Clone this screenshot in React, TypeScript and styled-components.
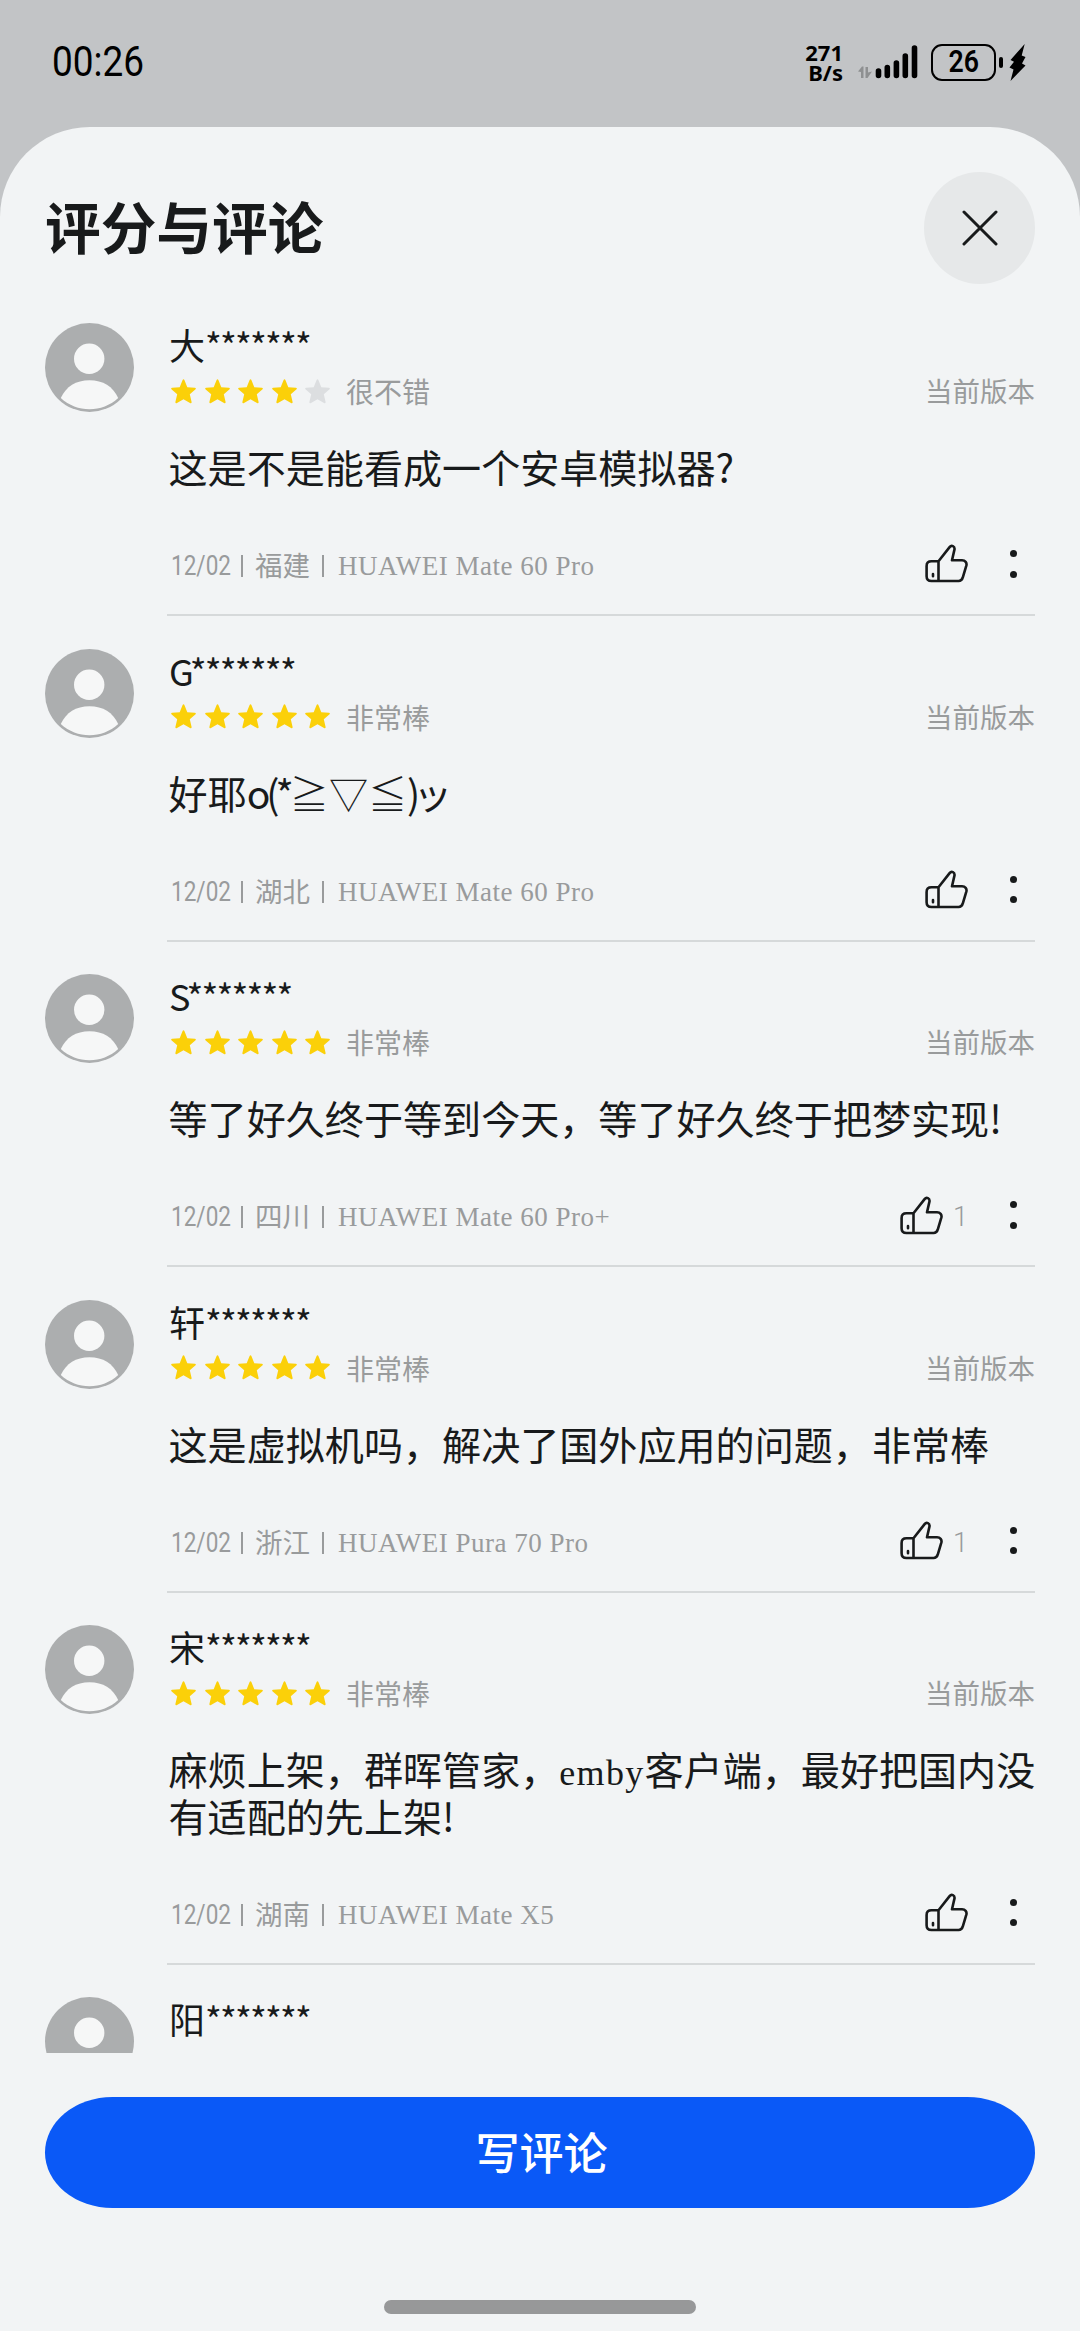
import React from "react";
import styled, { createGlobalStyle } from "styled-components";

const cjk = `"Noto Sans CJK SC", sans-serif`;

const GlobalStyle = createGlobalStyle`
  * { box-sizing: border-box; }
  body { margin: 0; background: #c2c4c6; }
`;

const Screen = styled.main`
  width: 1080px;
  height: 2331px;
  overflow: hidden;
  display: flex;
  flex-direction: column;
  background: #c2c4c6;
  font-family: ${cjk};
  color: #181a1b;
`;

const StatusBar = styled.header`
  height: 127px;
  flex: none;
  padding: 0 54px 3px 52px;
  display: flex;
  align-items: center;
  justify-content: space-between;
  color: #000;
`;

const Clock = styled.time`
  font: 400 42px/50px Roboto, sans-serif;
  transform: scaleX(0.88);
  transform-origin: left center;
`;

const StatusIcons = styled.div`
  display: flex;
  align-items: center;
`;

const NetSpeed = styled.div`
  font: 700 22px/20px "Noto Sans", sans-serif;
  text-align: right;
  margin: 0 15px 0 0;
`;

const SignalIcon = styled.svg`
  width: 60px;
  height: 36px;
  margin-right: 13px;
`;

const Battery = styled.div`
  width: 65px;
  height: 37px;
  border: 2.6px solid #000;
  border-radius: 11px;
  display: grid;
  place-items: center;
`;

const BatteryLevel = styled.span`
  font: 600 31px/32px Roboto, sans-serif;
  transform: scaleX(0.86);
`;

const BatteryNub = styled.i`
  width: 4.5px;
  height: 11px;
  border-radius: 2px;
  background: #000;
  margin: 0 6px 0 2.5px;
`;

const Bolt = styled.svg`
  width: 17px;
  height: 37px;
`;

const Sheet = styled.section`
  flex: 1;
  min-height: 0;
  display: flex;
  flex-direction: column;
  padding: 45px 45px 0;
  border-radius: 90px 90px 0 0;
  background: #f2f4f5;
`;

const SheetHeader = styled.div`
  height: 112px;
  flex: none;
  display: flex;
  align-items: center;
  justify-content: space-between;
`;

const Title = styled.h1`
  margin: -6px 0 0;
  font-size: 55.7px;
  line-height: 80px;
  font-weight: 700;
`;

const CloseButton = styled.button`
  width: 111px;
  height: 112px;
  padding: 0;
  border: 0;
  border-radius: 50%;
  background: #e6e8e9;
  display: grid;
  place-items: center;
`;

const List = styled.div`
  height: 1769px;
  flex: none;
  padding-top: 39px;
  overflow: hidden;
`;

const Review = styled.article`
  display: grid;
  grid-template-columns: 89px 868px;
  column-gap: 33px;
  align-items: start;
`;

const Avatar = styled.svg`
  width: 89px;
  height: 89px;
`;

const Content = styled.div`
  display: flex;
  flex-direction: column;
`;

const Name = styled.div`
  height: 46px;
  padding-left: 2px;
  font-size: 36px;
  line-height: 42px;
  display: flex;
`;

const Mask = styled.span<{ $afterLatin: boolean }>`
  letter-spacing: -1.8px;
  margin-left: ${(p) => (p.$afterLatin ? "-4px" : "0")};
`;

const RatingRow = styled.div`
  height: 44px;
  padding-left: 4px;
  display: flex;
  align-items: center;
  color: #999b9c;
  font-size: 28px;
  line-height: 44px;
`;

const Stars = styled.div`
  display: flex;
  gap: 8.5px;
  margin-right: 16px;
`;

const Star = styled.svg<{ $on: boolean }>`
  width: 25px;
  height: 25px;
  fill: ${(p) => (p.$on ? "#fbd009" : "#dcdee0")};
`;

const Version = styled.span`
  margin: -2px 0 0 auto;
  font-size: 27.5px;
`;

const Body = styled.p`
  margin: 30px -6px 0 0;
  padding-left: 1.5px;
  font-size: 39.1px;
  line-height: 46.4px;
  white-space: pre;
`;

const Latin = styled.span`
  font-family: "Liberation Serif", ${cjk};
  font-size: 36px;
  line-height: 1;
  letter-spacing: 1.3px;
`;

const Tight = styled.span<{ $by: number }>`
  letter-spacing: ${(p) => p.$by}px;
`;

const Symbols = styled.span`
  font-weight: 300;
`;

const Footer = styled.div`
  height: 40px;
  margin: 56.5px 0 28px;
  padding: 0 18px 0 4px;
  display: flex;
  align-items: center;
  color: #999b9c;
`;

const Meta = styled.div`
  display: flex;
  gap: 12px;
  font-size: 27.5px;
  line-height: 40px;
`;

const DateText = styled.span`
  font-family: Roboto, sans-serif;
  width: 58px;
  white-space: nowrap;
  transform: scaleX(0.82);
  transform-origin: left center;
`;

const Region = styled.span`
  line-height: 37px;
`;

const Pipe = styled.i`
  align-self: center;
  width: 2px;
  height: 22px;
  background: #999b9c;
`;

const Model = styled.span`
  font-family: "Liberation Serif", serif;
  font-size: 27px;
  letter-spacing: 0.5px;
  margin-left: 2px;
`;

const Actions = styled.div`
  margin-left: auto;
  display: flex;
  align-items: center;
`;

const ThumbIcon = styled.svg`
  width: 43px;
  height: 40px;
  margin-top: -5px;
`;

const Count = styled.span`
  width: 25px;
  text-align: right;
  font: 300 27px/40px Roboto, sans-serif;
`;

const MoreDots = styled.div`
  width: 7px;
  margin: -4px 0 0 42px;
  display: flex;
  flex-direction: column;
  gap: 13.5px;
`;

const Dot = styled.i`
  width: 7px;
  height: 7px;
  border-radius: 50%;
  background: #181a1b;
`;

const Divider = styled.hr`
  width: 100%;
  height: 2px;
  margin: 0 0 32.7px;
  border: 0;
  background: #d6d9da;
`;

const WriteButton = styled.button`
  width: 990px;
  height: 111px;
  flex: none;
  margin-top: 44px;
  border: 0;
  padding: 0 0 4px 3px;
  border-radius: 68px / 56px;
  background: #0a59f7;
  color: #fff;
  font: 500 44px/64px ${cjk};
`;

const HomeIndicator = styled.div`
  width: 312px;
  height: 14px;
  margin: 92px auto 0;
  border-radius: 7px;
  background: #979899;
`;

interface ReviewData {
  name: string;
  stars: number;
  label: string;
  body?: React.ReactNode;
  region?: string;
  model?: string;
  likes?: number;
}

const reviews: ReviewData[] = [
  { name: "大", stars: 4, label: "很不错", body: "这是不是能看成一个安卓模拟器?", region: "福建", model: "HUAWEI Mate 60 Pro" },
  { name: "G", stars: 5, label: "非常棒", body: <>好耶<Tight $by={-4}>o(*</Tight><Symbols>≧▽≦</Symbols><Tight $by={-7}>)</Tight>ッ</>, region: "湖北", model: "HUAWEI Mate 60 Pro" },
  { name: "S", stars: 5, label: "非常棒", body: "等了好久终于等到今天，等了好久终于把梦实现!", region: "四川", model: "HUAWEI Mate 60 Pro+", likes: 1 },
  { name: "轩", stars: 5, label: "非常棒", body: "这是虚拟机吗，解决了国外应用的问题，非常棒", region: "浙江", model: "HUAWEI Pura 70 Pro", likes: 1 },
  { name: "宋", stars: 5, label: "非常棒", body: <>麻烦上架，群晖管家，<Latin>emby</Latin>客户端，最好把国内没{"\n"}有适配的先上架!</>, region: "湖南", model: "HUAWEI Mate X5" },
];

function ReviewHead({ name, stars, label, clipped }: { name: string; stars?: number; label?: string; clipped?: boolean }) {
  return (
    <>
      <Name>{name}<Mask $afterLatin={/^[A-Z]/.test(name)}>*******</Mask></Name>
      {!clipped && (
        <RatingRow>
          <Stars>
            {[0, 1, 2, 3, 4].map((i) => (
              <Star key={i} $on={i < (stars ?? 0)} viewBox="0 0 25 25">
                <path d="M11.500 1.200Q12.500-.6 13.500 1.200L16.300 8.300 23.800 8.800Q25.600 9.100 24.300 10.500L18.800 15.300 20.600 23Q20.700 24.900 19 24.100L12.500 20.200 6 24.100Q4.300 24.900 4.400 23L6.200 15.300 .7 10.500Q-.6 9.100 1.200 8.800L8.700 8.300Z" />
              </Star>
            ))}
          </Stars>
          {label}
          <Version>当前版本</Version>
        </RatingRow>
      )}
    </>
  );
}

function UserAvatar() {
  return (
    <Avatar viewBox="0 0 89 89">
      <circle cx="44.5" cy="44.5" r="44.5" fill="#acaeaf" />
      <circle cx="44.2" cy="35.8" r="15.2" fill="#f6f7f7" />
      <path d="M15.8 75C21 63.500 31 57.200 44.500 57.200S68 63.500 73.200 75C65 82.500 55 86.300 44.500 86.300S24 82.500 15.800 75Z" fill="#f6f7f7" />
    </Avatar>
  );
}

function ReviewItem({ r }: { r: ReviewData }) {
  return (
    <Review>
      <UserAvatar />
      <Content>
        <ReviewHead name={r.name} stars={r.stars} label={r.label} />
        <Body>{r.body}</Body>
        <Footer>
          <Meta>
            <DateText>12/02</DateText>
            <Pipe />
            <Region>{r.region}</Region>
            <Pipe />
            <Model>{r.model}</Model>
          </Meta>
          <Actions>
            <ThumbIcon viewBox="0 0 43 40" fill="none" stroke="#181a1b" strokeWidth="2.600" strokeLinejoin="round" strokeLinecap="round">
              <path d="M13.500 18.300 24.600 4.100C26.500 1.700 29.900 3.200 29.500 6.400L27 17.300H37C40.300 17.300 42 19.700 41.400 22.400L37.900 34.200C37.200 36.700 35.800 38 33.600 38H6.500C3.400 38 1.600 36.300 1.600 33.200V22.900C1.600 19.900 3.400 18.300 6.500 18.300H13.500V38M8 31V33.300" />
            </ThumbIcon>
            {r.likes !== undefined && <Count>{r.likes}</Count>}
            <MoreDots><Dot /><Dot /></MoreDots>
          </Actions>
        </Footer>
        <Divider />
      </Content>
    </Review>
  );
}

export default function App() {
  return (
    <Screen>
      <GlobalStyle />
      <StatusBar>
        <Clock>00:26</Clock>
        <StatusIcons>
          <NetSpeed>271<br />B/s</NetSpeed>
          <SignalIcon viewBox="0 0 60 36">
            <path d="M0 27.500 4 22.500H5.500V34H3V28ZM7.500 23H10V28.500L14 27.500 9.500 34H7.500Z" fill="#8e9091" />
            <g stroke="#000" strokeWidth="5.600" strokeLinecap="round">
              <path d="M20.500 27V31.500M29.300 23.500V31.500M38.400 19V31.500M47.300 12V31.500M56.500 4V31.500" />
            </g>
          </SignalIcon>
          <Battery><BatteryLevel>26</BatteryLevel></Battery>
          <BatteryNub />
          <Bolt viewBox="0 0 17 37">
            <path d="M15.700 0 1.500 16 5 17.800 .5 23.500 4.500 25.500 1.500 37 16.500 21.500 13 19.500 16.500 13 12.700 11.500Z" />
          </Bolt>
        </StatusIcons>
      </StatusBar>
      <Sheet>
        <SheetHeader>
          <Title>评分与评论</Title>
          <CloseButton aria-label="关闭">
            <svg width="36" height="36" viewBox="0 0 36 36" stroke="#181a1b" strokeWidth="3" strokeLinecap="round">
              <path d="M2 2 34 34M34 2 2 34" />
            </svg>
          </CloseButton>
        </SheetHeader>
        <List>
          {reviews.map((r) => <ReviewItem key={r.name} r={r} />)}
          <Review>
            <UserAvatar />
            <Content><ReviewHead name="阳" clipped /></Content>
          </Review>
        </List>
        <WriteButton>写评论</WriteButton>
        <HomeIndicator />
      </Sheet>
    </Screen>
  );
}
